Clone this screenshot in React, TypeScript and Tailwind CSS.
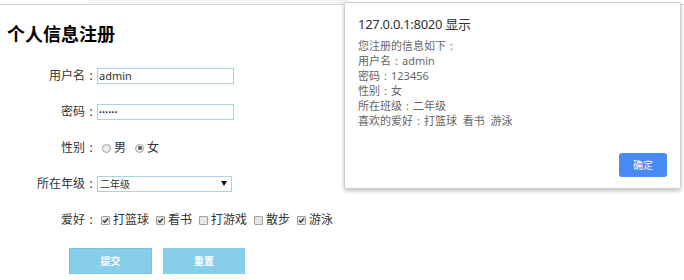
import React from "react";

const font = { fontFamily: '"Noto Sans", "Noto Sans CJK SC", sans-serif' };

function Colon() {
  return <span className="inline-block w-[1em] text-center">:</span>;
}

function Radio({ checked }: { checked?: boolean }) {
  return (
    <span className="flex h-[9px] w-[9px] items-center justify-center rounded-full border border-[#a0a0a0] bg-[#eeeeee]">
      {checked && <span className="h-[4px] w-[4px] rounded-full bg-[#555]" />}
    </span>
  );
}

function Check({ checked }: { checked?: boolean }) {
  return (
    <span className="flex h-[9px] w-[9px] items-center justify-center rounded-[1px] border border-[#a0a0a0] bg-[#e6e6e6]">
      {checked && (
        <svg width="7" height="7" viewBox="0 0 7 7">
          <path d="M1 3.6 L2.8 5.3 L6 1.4" fill="none" stroke="#333" strokeWidth="1.4" />
        </svg>
      )}
    </span>
  );
}

function Row({ label, children }: { label: string; children: React.ReactNode }) {
  return (
    <div className="flex h-[16px] items-center">
      <span className="w-[97px] text-right text-[12px] text-[#333]">
        {label}
        <Colon />
      </span>
      {children}
    </div>
  );
}

const hobbies = [
  { name: "打篮球", on: true },
  { name: "看书", on: true },
  { name: "打游戏", on: false },
  { name: "散步", on: false },
  { name: "游泳", on: true },
];

export default function App() {
  return (
    <div className="relative h-[280px] w-[684px] overflow-hidden bg-white" style={font}>
      <div className="flex h-[5px] border-b border-[#d6d6d6]">
        <div className="ml-[88px] w-[260px] rounded-bl-[6px] bg-[#f4f4f4]" />
      </div>

      <h3 className="ml-[7px] mt-[17px] text-[18px] font-bold leading-[25px] text-black">个人信息注册</h3>

      <form className="mt-[21px] flex flex-col gap-[20px]">
        <Row label="用户名">
          <input
            readOnly
            defaultValue="admin"
            className="h-[16px] w-[137px] border border-[#a9d3dc] px-[1px] text-[11px] text-[#333] outline-none"
          />
        </Row>
        <Row label="密码">
          <input
            readOnly
            defaultValue="••••••"
            className="h-[16px] w-[137px] border border-[#a9d3dc] px-[1px] text-[7px] tracking-[0.5px] text-[#222] outline-none"
          />
        </Row>
        <Row label="性别">
          <div className="ml-[5px] flex items-center text-[12px] text-[#333]">
            <Radio />
            <span className="ml-[3px]">男</span>
            <span className="ml-[9px]">
              <Radio checked />
            </span>
            <span className="ml-[3px]">女</span>
          </div>
        </Row>
        <Row label="所在年级">
          <div className="relative flex h-[16px] items-center">
            <select
              defaultValue="2"
              className="h-[16px] w-[135px] appearance-none border border-[#a9d3dc] bg-white px-[2px] text-[10px] leading-[14px] text-[#333] outline-none"
            >
              <option value="1">一年级</option>
              <option value="2">二年级</option>
              <option value="3">三年级</option>
            </select>
            <span className="pointer-events-none absolute right-[5px] top-[5px] flex">
              <svg width="6" height="5" viewBox="0 0 6 5">
                <path d="M0 0 H6 L3 5 Z" fill="#111" />
              </svg>
            </span>
          </div>
        </Row>
        <Row label="爱好">
          <div className="ml-[4px] flex items-center text-[12px] text-[#333]">
            {hobbies.map((h, i) => (
              <div key={h.name} className={`flex items-center ${i > 0 ? "ml-[7px]" : ""}`}>
                <Check checked={h.on} />
                <span className="ml-[3px]">{h.name}</span>
              </div>
            ))}
          </div>
        </Row>
        <div className="ml-[69px] flex gap-[11px]">
          <button type="button" className="h-[26px] w-[83px] border border-[#7cc0e4] bg-[#87ceeb] text-[10px] font-bold text-white">
            提交
          </button>
          <button type="button" className="h-[26px] w-[82px] bg-[#87ceeb] text-[10px] font-bold text-white">
            重置
          </button>
        </div>
      </form>

      <div className="absolute left-[344px] top-[2px] flex h-[187px] w-[337px] flex-col rounded-[2px] border border-[#cfcfcf] bg-white px-[13px] shadow-[0_2px_4px_rgba(0,0,0,0.25)]">
        <div className="mt-[12px] text-[13px] leading-[18px] tracking-[-0.3px] text-[#333]">127.0.0.1:8020 显示</div>
        <div className="mt-[5px] text-[11px] leading-[15px] text-[#666]">
          <div>您注册的信息如下<Colon /></div>
          <div>用户名<Colon />admin</div>
          <div>密码<Colon />123456</div>
          <div>性别<Colon />女</div>
          <div>所在班级<Colon />二年级</div>
          <div>喜欢的爱好<Colon />打篮球&nbsp;&nbsp;看书&nbsp;&nbsp;游泳</div>
        </div>
        <div className="mt-auto mb-[11px] flex justify-end">
          <button type="button" className="h-[24px] w-[48px] rounded-[3px] bg-[#4a8af4] text-[10px] text-white">
            确定
          </button>
        </div>
      </div>
    </div>
  );
}
